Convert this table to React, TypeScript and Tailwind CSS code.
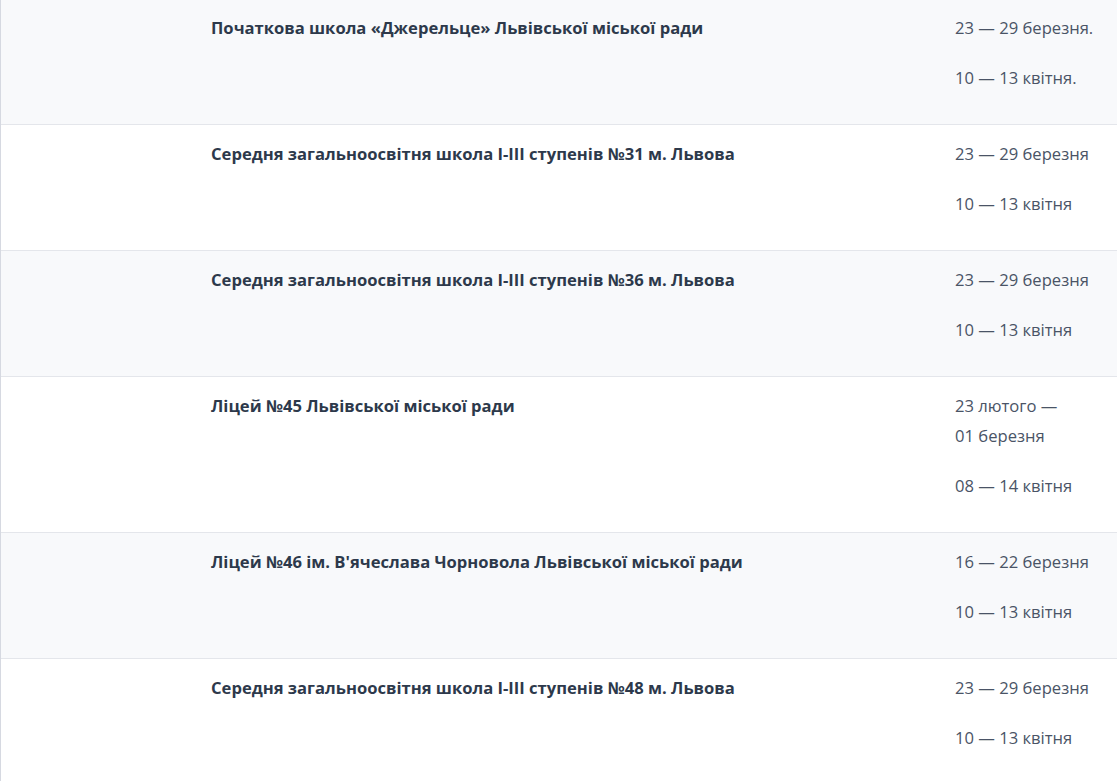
const rows = [
  { name: 'Початкова школа «Джерельце» Львівської міської ради', dates: [['23 — 29 березня.'], ['10 — 13 квітня.']] },
  { name: 'Середня загальноосвітня школа І-ІІІ ступенів №31 м. Львова', dates: [['23 — 29 березня'], ['10 — 13 квітня']] },
  { name: 'Середня загальноосвітня школа І-ІІІ ступенів №36 м. Львова', dates: [['23 — 29 березня'], ['10 — 13 квітня']] },
  { name: 'Ліцей №45 Львівської міської ради', dates: [['23 лютого —', '01 березня'], ['08 — 14 квітня']] },
  { name: "Ліцей №46 ім. В'ячеслава Чорновола Львівської міської ради", dates: [['16 — 22 березня'], ['10 — 13 квітня']] },
  { name: 'Середня загальноосвітня школа І-ІІІ ступенів №48 м. Львова', dates: [['23 — 29 березня'], ['10 — 13 квітня']] },
]

export default function App() {
  return (
    <div
      className="h-[781px] overflow-hidden bg-white"
      style={{ fontFamily: '"Open Sans", "Noto Sans", sans-serif' }}
    >
      <div className="-mt-[2px] border-l border-[#d6d9e1]">
        {rows.map((r, i) => (
          <div
            key={i}
            className={
              'grid grid-cols-[196px_1fr_177px] border-t border-[#e4e6eb] ' +
              (i % 2 === 0 ? 'bg-[#f8f9fb]' : 'bg-white')
            }
          >
            <div />
            <div className="pl-[14px] pr-[15px] pt-[14px] pb-[32px] text-[16.6px] leading-[30px] font-bold text-[#2d394b]">
              {r.name}
            </div>
            <div className="px-[15px] pt-[14px] pb-[31px] text-[16.6px] leading-[30px] text-[#4a5466]">
              {r.dates.map((d, j) => (
                <p key={j} className={j > 0 ? 'mt-[20px]' : ''}>
                  {d.map((line, k) => (
                    <span key={k} className="block">
                      {line}
                    </span>
                  ))}
                </p>
              ))}
            </div>
          </div>
        ))}
      </div>
    </div>
  )
}
